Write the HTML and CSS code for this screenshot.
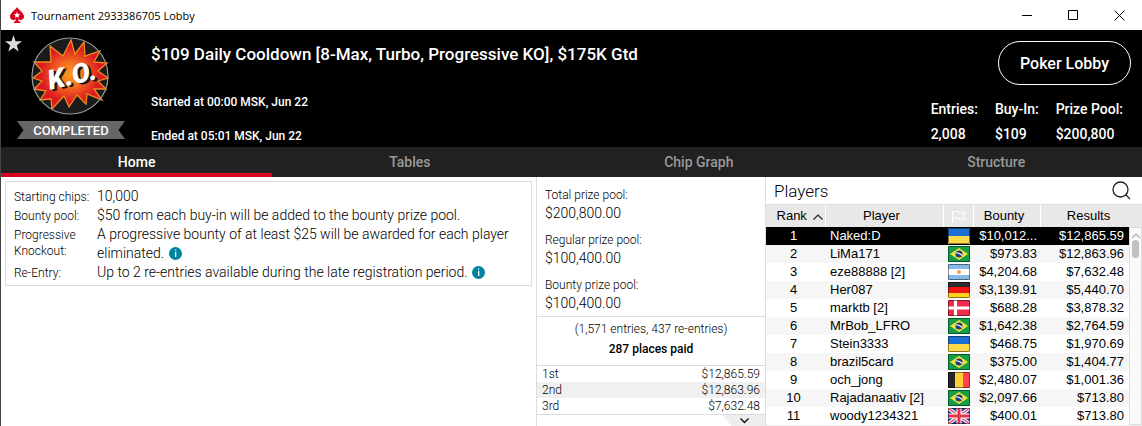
FILE: index.html
```
<!DOCTYPE html>
<html lang="en">
<head>
  <meta charset="UTF-8" />
  <meta name="viewport" content="width=device-width, initial-scale=1.0"/>
  <title>Tournament 2933386705 Lobby</title>
  <link rel="stylesheet" href="styles.css">
</head>
<body>

  <div class="titlebar">
    <svg class="spade" viewBox="0 0 14 16" width="14" height="16">
      <path d="M7 0C6 2.500 0 5.500 0 9.500C0 12.800 3.600 14 6 12.300L5.200 14.600H3.800V16H10.200V14.600H8.800L8 12.300C10.400 14 14 12.800 14 9.500C14 5.500 8 2.500 7 0Z" fill="#d7001f"/>
      <path d="M7 4.800L7.900 7.100L10.300 7.200L8.400 8.700L9.100 11L7 9.700L4.900 11L5.600 8.700L3.700 7.200L6.100 7.100Z" fill="#fff"/>
    </svg>
    <span class="window-title">Tournament 2933386705 Lobby</span>
    <div class="window-buttons">
      <button type="button" aria-label="Minimize"><svg width="11" height="11" viewBox="0 0 11 11"><path d="M0 5.500H10"/></svg></button>
      <button type="button" aria-label="Maximize"><svg width="11" height="11" viewBox="0 0 11 11"><path d="M.5.500H9.500V9.500H.5Z"/></svg></button>
      <button type="button" aria-label="Close"><svg width="11" height="11" viewBox="0 0 11 11"><path d="M.5.500L10.500 10.500M10.500.500L.5 10.500"/></svg></button>
    </div>
  </div>

  <header>
    <div class="badge">
      <button class="favourite" type="button" aria-label="Favourite">
        <svg width="17" height="17" viewBox="0 0 17 17"><path d="M8.500 0L10.500 6.200L17 6.300L11.800 10.200L13.700 16.500L8.500 12.700L3.300 16.500L5.200 10.200L0 6.300L6.500 6.200Z" fill="#ddd"/></svg>
      </button>
      <svg class="logo" width="78" height="78" viewBox="0 0 78 78">
        <defs>
          <radialGradient id="blast">
            <stop offset="0" stop-color="#ff9a1e"/>
            <stop offset="0.350" stop-color="#f4701f"/>
            <stop offset="0.800" stop-color="#dc1a22"/>
          </radialGradient>
        </defs>
        <circle cx="39" cy="39" r="38" fill="#1b1b1b"/>
        <path d="M40 3L44 17L53 5L54 19L69 14L63 25L76 26L67 34L77 41L67 44L75 52L63 52L71 63L56 57L55 67L46 58L38 70L33 59L21 72L20 62L9 63L15 54L3 52L11 44L2 41L11 34L3 25L20 25L19 9L32 19Z" fill="url(#blast)" stroke="#f08a1c" stroke-width="1.300"/>
        <circle cx="39" cy="39" r="38" fill="none" stroke="#999" stroke-width="1.200"/>
        <g transform="rotate(-13 39 39)" class="logo-text">
          <text x="43" y="50" fill="#181818">K.O.</text>
          <text x="41" y="48" fill="#fff">K.O.</text>
        </g>
      </svg>
      <div class="ribbon">COMPLETED</div>
    </div>

    <div class="summary">
      <h1>$109 Daily Cooldown [8-Max, Turbo, Progressive KO], $175K Gtd</h1>
      <p>Started at 00:00 MSK, Jun 22</p>
      <p>Ended at 05:01 MSK, Jun 22</p>
    </div>

    <div class="header-side">
      <button class="lobby-button" type="button">Poker Lobby</button>
      <dl class="stats">
        <div><dt>Entries:</dt><dd>2,008</dd></div>
        <div><dt>Buy-In:</dt><dd>$109</dd></div>
        <div><dt>Prize Pool:</dt><dd>$200,800</dd></div>
      </dl>
    </div>
  </header>

  <nav>
    <a class="active" href="#home">Home</a>
    <a href="#tables">Tables</a>
    <a href="#chip-graph">Chip Graph</a>
    <a href="#structure">Structure</a>
  </nav>

  <main>
    <section class="info">
      <dl class="info-box">
        <dt>Starting chips:</dt>
        <dd>10,000</dd>
        <dt>Bounty pool:</dt>
        <dd>$50 from each buy-in will be added to the bounty prize pool.</dd>
        <dt>Progressive Knockout:</dt>
        <dd>A progressive bounty of at least $25 will be awarded for each player eliminated. <svg class="info-icon" width="13" height="13" viewBox="0 0 13 13"><circle cx="6.500" cy="6.500" r="6.500" fill="#00839e"/><path d="M6 2.500h1.300v1.300H6zM6 5h1.300v5H6z" fill="#fff"/></svg></dd>
        <dt>Re-Entry:</dt>
        <dd>Up to 2 re-entries available during the late registration period. <svg class="info-icon" width="13" height="13" viewBox="0 0 13 13"><circle cx="6.500" cy="6.500" r="6.500" fill="#00839e"/><path d="M6 2.500h1.300v1.300H6zM6 5h1.300v5H6z" fill="#fff"/></svg></dd>
      </dl>
    </section>

    <section class="prizes">
      <dl class="pools">
        <dt>Total prize pool:</dt>
        <dd>$200,800.00</dd>
        <dt>Regular prize pool:</dt>
        <dd>$100,400.00</dd>
        <dt>Bounty prize pool:</dt>
        <dd>$100,400.00</dd>
      </dl>
      <div class="places">
        <p>(1,571 entries, 437 re-entries)</p>
        <p class="paid">287 places paid</p>
      </div>
      <table class="payouts">
        <tbody>
          <tr><td>1st</td><td>$12,865.59</td></tr>
          <tr><td>2nd</td><td>$12,863.96</td></tr>
          <tr><td>3rd</td><td>$7,632.48</td></tr>
        </tbody>
      </table>
      <button class="expand" type="button" aria-label="Show all payouts">
        <svg width="9" height="6" viewBox="0 0 9 6"><path d="M.5.500L4.500 4.500L8.500.500" fill="none" stroke="#111" stroke-width="1.400"/></svg>
      </button>
    </section>

    <section class="players">
      <div class="players-head">
        <h2>Players</h2>
        <button class="search" type="button" aria-label="Search players">
          <svg width="19" height="19" viewBox="0 0 19 19"><circle cx="8.500" cy="8.500" r="7.500"/><path d="M13.500 13.500L18 18"/></svg>
        </button>
      </div>
      <div class="players-list">
        <table>
          <thead>
            <tr>
              <th class="rank">Rank <svg width="10" height="6" viewBox="0 0 10 6"><path d="M.5 5.500L5 1L9.500 5.500" fill="none" stroke="#222" stroke-width="1.200"/></svg></th>
              <th class="name">Player</th>
              <th class="country" aria-label="Country"><svg width="15" height="13" viewBox="0 0 15 13"><path d="M1.500 13V1.500H7L8 3H14L12 6L14 9H8L7 8H1.500" fill="none" stroke="#fff" stroke-width="1.200"/></svg></th>
              <th class="bounty">Bounty</th>
              <th class="results">Results</th>
            </tr>
          </thead>
          <tbody id="playerRows"></tbody>
        </table>
        <div class="scrollbar">
          <svg width="10" height="6" viewBox="0 0 10 6"><path d="M1 5L5 1L9 5" fill="none" stroke="#aaa" stroke-width="1.200"/></svg>
          <div class="thumb"></div>
        </div>
      </div>
    </section>
  </main>

  <script>
    const flags = {
      ua: '<path fill="#1b6fd0" d="M0 0h22v8H0z"/><path fill="#ffd94a" d="M0 8h22v8H0z"/>',
      br: '<path fill="#14a04a" d="M0 0h22v16H0z"/><path fill="#ffdf2e" d="M11 2L20 8L11 14L2 8Z"/><circle cx="11" cy="8" r="3.500" fill="#123c8c"/><path d="M8 6.800Q11.500 6.500 14 9.500" fill="none" stroke="#fff" stroke-width="1.200"/>',
      ar: '<path fill="#86b9ea" d="M0 0h22v16H0z"/><path fill="#fff" d="M0 5h22v6H0z"/><circle cx="11" cy="8" r="2" fill="#f0a43a"/>',
      de: '<path fill="#2b2b2b" d="M0 0h22v5H0z"/><path fill="#f01414" d="M0 5h22v6H0z"/><path fill="#ffd21e" d="M0 11h22v5H0z"/>',
      dk: '<path fill="#f22b4e" d="M0 0h22v16H0z"/><path fill="#fff" d="M6 0h3v16H6zM0 6.500h22v3H0z"/>',
      be: '<path fill="#262626" d="M0 0h7v16H0z"/><path fill="#ffcf3a" d="M7 0h8v16H7z"/><path fill="#ff4352" d="M15 0h7v16h-7z"/>',
      gb: '<path fill="#2a3f9c" d="M0 0h22v16H0z"/><path d="M0 0L22 16M22 0L0 16" stroke="#fff" stroke-width="3.500"/><path d="M0 0L22 16M22 0L0 16" stroke="#e8324e" stroke-width="1.200"/><path d="M11 0V16M0 8H22" stroke="#fff" stroke-width="5"/><path d="M11 0V16M0 8H22" stroke="#e8324e" stroke-width="3"/>'
    };

    const players = [
      { name: "Naked:D", flag: "ua", bounty: "$10,012...", result: "$12,865.59" },
      { name: "LiMa171", flag: "br", bounty: "$973.83", result: "$12,863.96" },
      { name: "eze88888 [2]", flag: "ar", bounty: "$4,204.68", result: "$7,632.48" },
      { name: "Her087", flag: "de", bounty: "$3,139.91", result: "$5,440.70" },
      { name: "marktb [2]", flag: "dk", bounty: "$688.28", result: "$3,878.32" },
      { name: "MrBob_LFRO", flag: "br", bounty: "$1,642.38", result: "$2,764.59" },
      { name: "Stein3333", flag: "ua", bounty: "$468.75", result: "$1,970.69" },
      { name: "brazil5card", flag: "br", bounty: "$375.00", result: "$1,404.77" },
      { name: "och_jong", flag: "be", bounty: "$2,480.07", result: "$1,001.36" },
      { name: "Rajadanaativ [2]", flag: "br", bounty: "$2,097.66", result: "$713.80" },
      { name: "woody1234321", flag: "gb", bounty: "$400.01", result: "$713.80" }
    ];

    const playerRows = document.getElementById("playerRows");

    players.forEach((player, index) => {
      const row = document.createElement("tr");
      if (index === 0) row.className = "selected";
      row.innerHTML = `
        <td class="rank">${index + 1}</td>
        <td class="name">${player.name}</td>
        <td class="country"><svg class="flag" width="22" height="16" viewBox="0 0 22 16">${flags[player.flag]}<rect x="0.500" y="0.500" width="21" height="15" rx="1" fill="none" stroke="#000" stroke-opacity="0.450"/></svg></td>
        <td class="bounty">${player.bounty}</td>
        <td class="results">${player.result}</td>
      `;
      playerRows.appendChild(row);
    });
  </script>

</body>
</html>
```
FILE: styles.css
```
* { box-sizing: border-box; }
body {
  font-family: Roboto, sans-serif;
  margin: 0;
  min-height: 100vh;
  display: flex;
  flex-direction: column;
  background: #fff;
  color: #000;
  border-left: 1px solid #444;
}
h1, h2, p, dl, dd { margin: 0; }
button {
  font-family: inherit;
  background: none;
  border: none;
  padding: 0;
  color: inherit;
  cursor: pointer;
}
svg { display: block; }

.titlebar {
  display: flex;
  align-items: center;
  height: 30px;
  padding-left: 9px;
}
.window-title {
  flex: 1;
  margin-left: 7px;
  font-family: "Open Sans", sans-serif;
  font-size: 11px;
}
.window-buttons { display: flex; }
.window-buttons button {
  display: flex;
  justify-content: center;
  align-items: center;
  width: 46px;
  height: 30px;
}
.window-buttons path {
  fill: none;
  stroke: #000;
}

header {
  display: flex;
  height: 117px;
  background: #000;
  color: #fff;
  font-weight: 500;
}
.badge {
  position: relative;
  width: 150px;
  padding: 7px 0 0 16px;
}
.favourite {
  position: absolute;
  top: 5px;
  left: 4px;
}
.logo { margin-left: 14px; }
.logo-text {
  font-size: 27px;
  font-weight: 900;
  font-style: italic;
  text-anchor: middle;
}
.ribbon {
  width: 108px;
  height: 18px;
  margin-top: 6px;
  background: #666;
  clip-path: polygon(0 0, 100% 0, 94% 50%, 100% 100%, 0 100%, 6% 50%);
  font-size: 13px;
  line-height: 20px;
  text-align: center;
}
.summary {
  flex: 1;
  padding-top: 14px;
}
.summary h1 {
  font-size: 17px;
  font-weight: 500;
  line-height: 20px;
  margin-bottom: 21px;
}
.summary p {
  font-size: 12px;
  line-height: 34px;
}
.header-side { padding: 11px 11px 0 0; }
.lobby-button {
  display: block;
  width: 133px;
  height: 44px;
  margin-left: auto;
  border: 1px solid #fff;
  border-radius: 22px;
  font-size: 16px;
  font-weight: 500;
}
.stats {
  display: flex;
  gap: 17px;
  margin: 12px 8px 0 0;
  font-size: 14px;
  line-height: 25px;
}

nav {
  display: flex;
  height: 30px;
  background: #212121;
}
nav a {
  flex: 1 1 auto;
  border-bottom: 4px solid transparent;
  color: #999;
  font-size: 14px;
  font-weight: 500;
  line-height: 30px;
  text-align: center;
  text-decoration: none;
}
nav a.active {
  color: #fff;
  border-color: #d7001f;
}

main {
  flex: 1;
  display: grid;
  grid-template-columns: minmax(0, 1fr) 230px 376px;
  font-weight: 300;
}
.info { padding: 4px; }
.info-box {
  display: grid;
  grid-template-columns: 83px 1fr;
  padding: 5px 8px 3px;
  border: 1px solid #ddd;
  line-height: 19px;
}
.info-box dt {
  font-size: 12px;
  line-height: 16px;
  padding-top: 2px;
  width: 80px;
}
.info-box dd { font-size: 14px; }
.info-icon {
  display: inline-block;
  margin-left: 1px;
  vertical-align: -2px;
}

.prizes {
  display: flex;
  flex-direction: column;
  border: solid #ddd;
  border-width: 0 1px;
}
.pools { padding: 10px 8px 4px; }
.pools dt {
  font-size: 12px;
  line-height: 17px;
}
.pools dd {
  font-size: 14px;
  line-height: 18px;
  margin-bottom: 10px;
}
.pools dd:last-child { margin-bottom: 0; }
.places {
  padding: 2px 0 6px;
  border: solid #ddd;
  border-width: 1px 0;
  font-size: 12px;
  line-height: 20px;
  text-align: center;
}
.places .paid { font-weight: 500; }
.payouts {
  width: 100%;
  border-collapse: collapse;
  border-bottom: 1px solid #ddd;
  font-size: 12px;
  line-height: 16px;
}
.payouts td { padding: 0 5px; }
.payouts td:last-child { text-align: right; }
.payouts tr:nth-child(even) { background: #f0f0f0; }
.expand {
  display: flex;
  justify-content: center;
  align-items: center;
  align-self: flex-end;
  width: 42px;
  height: 11px;
  background: #eee;
  clip-path: polygon(0 0, 100% 0, 100% 100%, 20% 100%);
}

.players-head {
  display: flex;
  justify-content: space-between;
  align-items: center;
  height: 28px;
  padding: 0 11px 0 8px;
  border-bottom: 1px solid #ddd;
}
.players-head h2 {
  font-size: 17px;
  font-weight: 300;
}
.search svg {
  fill: none;
  stroke: #222;
  stroke-width: 1.3;
}
.players-list {
  position: relative;
  border-bottom: 1px solid #eee;
}
.players table {
  width: 100%;
  table-layout: fixed;
  border-collapse: separate;
  border-spacing: 0;
  font-family: "Liberation Sans", Arial, sans-serif;
  font-size: 13px;
  line-height: 18px;
}
.players th {
  height: 22px;
  padding: 0 6px 0 0;
  background: #e8e8e8;
  border-right: 1px solid #fff;
  font-weight: 400;
}
.players th:last-child { border-right: none; }
.players th.rank { padding: 0 0 0 9px; }
.players th.country { padding: 0; }
.players td {
  height: 18px;
  padding: 0;
  font-weight: 400;
}
.players .rank { width: 60px; }
.players .name { width: 118px; }
.players .country { width: 30px; }
.players .bounty { width: 67px; }
.rank svg {
  display: inline-block;
  margin-left: 3px;
}
.players td.rank {
  text-align: center;
  padding-right: 5px;
}
.players td.name { padding-left: 4px; }
.country svg { margin: 0 auto; }
.players td.bounty {
  text-align: right;
  padding-right: 4px;
}
.players td.results {
  text-align: right;
  padding-right: 18px;
}
.players tbody tr:nth-child(even) { background: #f6f6f6; }
.players tbody tr.selected {
  background: #000;
  color: #fff;
}
/* runs over the right edge of the rows, below the header cells */
.scrollbar {
  position: absolute;
  top: 22px;
  right: 0;
  bottom: 0;
  width: 13px;
  padding: 5px 1px 0;
  background: #fafafa;
  border: 1px solid #ddd;
}
.thumb {
  height: 18px;
  margin: 1px 1px 0;
  border-radius: 4px;
  background: #c1c1c1;
}
```
